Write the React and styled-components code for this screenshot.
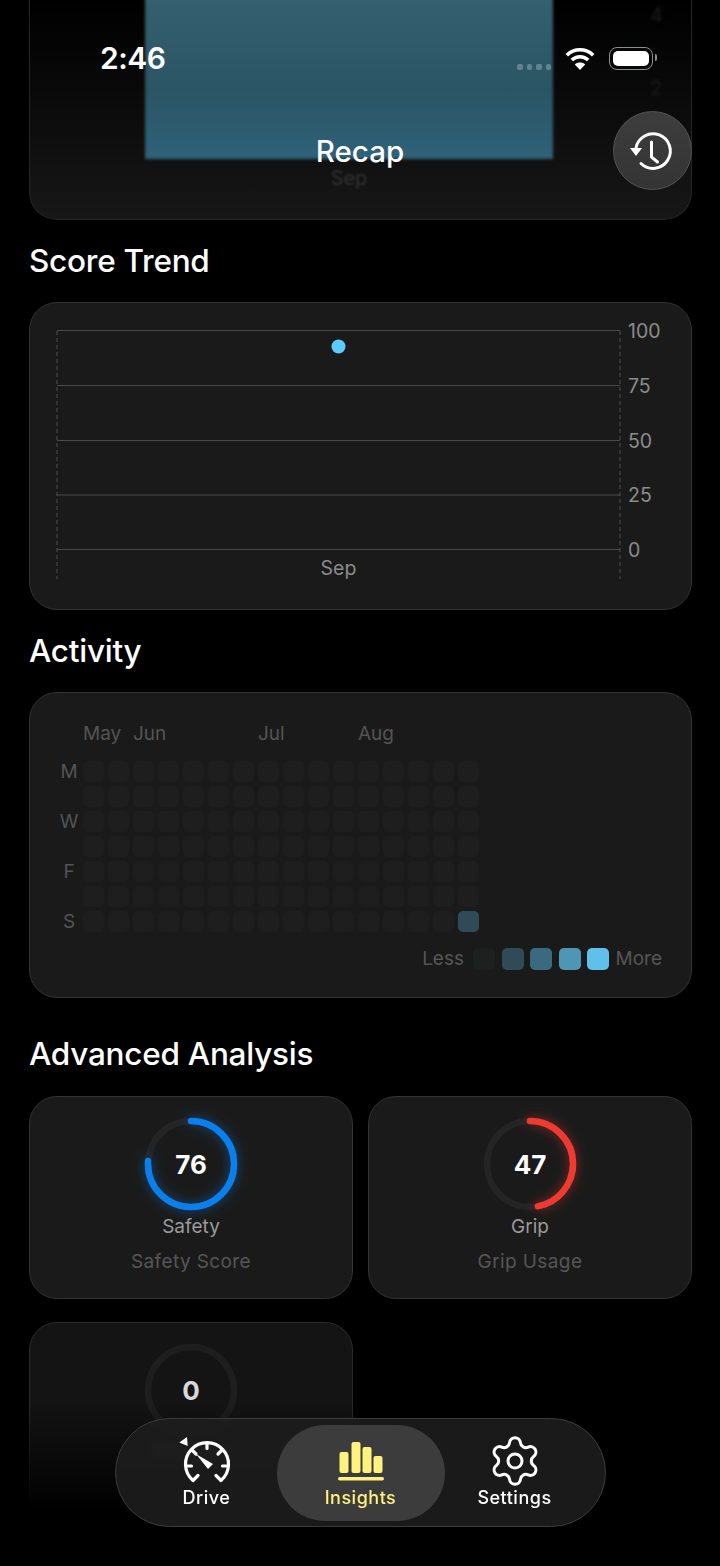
import React from 'react';
import styled, { createGlobalStyle } from 'styled-components';
import { Settings } from 'lucide-react';

const GlobalStyle = createGlobalStyle`
    html, body {
        margin: 0;
        padding: 0;
        background: #000;
    }
    body {
        font-family: Inter, "Liberation Sans", sans-serif;
        color: #fff;
    }
    * {
        box-sizing: border-box;
    }
`

const Screen = styled.div`
    position: relative;
    width: 720px;
    height: 1566px;
    overflow: hidden;
    background: #000;
`
const Content = styled.div`
    display: flex;
    flex-direction: column;
    padding: 0 28px 0 29px;
`
const Card = styled.div`
    background: #1a1a1a;
    border: 1.5px solid #333;
    border-radius: 28px;
`
const RecapCard = styled.div`
    height: 220px;
    padding-left: 115px;
    background: linear-gradient(#000 0%, #0a0a0a 45%, #111 75%, #171717 100%);
    border: 1.5px solid #262626;
    border-top: none;
    border-radius: 0 0 28px 28px;
    overflow: hidden;
`
const RecapRow = styled.div`
    display: flex;
    margin-top: -10px;
`
const RecapBar = styled.div`
    width: 408px;
    height: 169px;
    background: linear-gradient(#35606f 0%, #2a5564 60%, #2f6279 100%);
    filter: blur(1.5px);
`
const RecapTicks = styled.div`
    display: flex;
    flex-direction: column;
    gap: 49px;
    margin-left: 97px;
    padding-top: 13px;
    font-size: 20px;
    line-height: 24px;
    color: #1d1d1d;
    filter: blur(1.5px);
`
const RecapAxisLabel = styled.div`
    width: 408px;
    margin-top: 7px;
    text-align: center;
    font-size: 20px;
    line-height: 24px;
    color: #333;
    filter: blur(1.2px);
`
const SectionTitle = styled.h2`
    margin: ${(p) => p.$top || 21}px 0 ${(p) => p.$bottom || 21}px;
    font-size: 31.5px;
    line-height: 40px;
    font-weight: 500;
    letter-spacing: -0.25px;
    color: #fff;
`
const TrendCard = styled(Card)`
    height: 308px;
`
const TrendChart = styled.svg`
    display: block;
    width: 100%;
    height: 100%;
    font-family: Inter, "Liberation Sans", sans-serif;
    font-size: 19.5px;
    fill: #8c8c8c;
`
const ActivityCard = styled(Card)`
    height: 306px;
    padding: 29px 29px 0 23px;
`
const HeatGrid = styled.div`
    display: grid;
    grid-template-columns: 26px repeat(16, 21px);
    column-gap: 4px;
    row-gap: 4px;
`
const MonthRow = styled(HeatGrid)`
    margin-bottom: 15px;
`
const Month = styled.div`
    grid-row: 1;
    grid-column: ${(p) => p.$col + 2} / span 2;
    font-size: 19px;
    line-height: 24px;
    color: #545454;
`
const DayLabel = styled.div`
    grid-column: 1;
    font-size: 19px;
    line-height: 21px;
    padding-left: 6px;
    text-align: center;
    color: #545454;
`
const Cell = styled.div`
    width: 21px;
    height: 21px;
    border-radius: 5px;
    background: ${(p) => p.$color || '#1e1e1e'};
`
const Legend = styled.div`
    display: flex;
    align-items: center;
    justify-content: flex-end;
    margin-top: 16px;
    gap: 6.5px;
    font-size: 19px;
    line-height: 22px;
    color: #565656;
`
const LegendCell = styled.div`
    width: 22px;
    height: 22px;
    border-radius: 5px;
    background: ${(p) => p.$color};
`
const LegendLess = styled.span`
    margin-right: 2.5px;
`
const GaugeGrid = styled.div`
    display: grid;
    grid-template-columns: repeat(2, 324px);
    column-gap: 15px;
    row-gap: 23px;
`
const GaugeCard = styled(Card)`
    display: flex;
    flex-direction: column;
    align-items: center;
    height: 203px;
    padding-top: 21px;
    background: ${(p) => p.$dim ? '#141414' : '#1a1a1a'};
    border-color: ${(p) => p.$dim ? '#2b2b2b' : '#333'};
`
const Ring = styled.div`
    position: relative;
    width: 92px;
    height: 92px;
    svg {
        display: block;
        overflow: visible;
    }
`
const RingValue = styled.div`
    position: absolute;
    inset: 0;
    display: flex;
    align-items: center;
    justify-content: center;
    font-size: 26px;
    font-weight: 700;
    color: ${(p) => p.$dim ? '#d8d8d8' : '#fff'};
`
const GaugeLabel = styled.div`
    margin-top: 5px;
    font-size: 19px;
    line-height: 24px;
    color: ${(p) => p.$dim ? '#8a8a8a' : '#9b9b9b'};
`
const GaugeSub = styled.div`
    margin-top: 11px;
    font-size: 19px;
    line-height: 24px;
    letter-spacing: 0.4px;
    color: #565656;
`
const BottomFade = styled.div`
    position: absolute;
    left: 0;
    right: 0;
    top: 1400px;
    height: 135px;
    background: linear-gradient(rgba(0,0,0,0), rgba(0,0,0,1) 82%);
`
const StatusBar = styled.div`
    position: absolute;
    top: 38px;
    left: 100px;
    right: 67px;
    height: 40px;
    display: flex;
    align-items: center;
    justify-content: space-between;
`
const Clock = styled.div`
    font-size: 30px;
    font-weight: 600;
    letter-spacing: -0.5px;
    line-height: 40px;
`
const StatusIcons = styled.div`
    display: flex;
    align-items: center;
    gap: 14px;
`
const SignalDots = styled.div`
    display: flex;
    gap: 4px;
    margin-top: 17px;
`
const SignalDot = styled.div`
    width: 5.5px;
    height: 6px;
    border-radius: 2px;
    background: #5f8593;
`
const Battery = styled.div`
    position: relative;
    width: 44px;
    height: 23px;
    padding: 3px;
    border: 1.5px solid #8a8f92;
    border-radius: 8px;
    &::before {
        content: '';
        display: block;
        height: 100%;
        background: #fff;
        border-radius: 5px;
    }
    &::after {
        content: '';
        position: absolute;
        right: -5px;
        top: 6px;
        width: 2.5px;
        height: 7px;
        border-radius: 0 2px 2px 0;
        background: #8a8f92;
    }
`
const HeaderTitle = styled.div`
    position: absolute;
    top: 131px;
    left: 0;
    right: 0;
    text-align: center;
    font-size: 29.5px;
    line-height: 40px;
    font-weight: 500;
    color: #fff;
`
const HistoryButton = styled.div`
    position: absolute;
    top: 111px;
    left: 613px;
    width: 79px;
    height: 79px;
    display: flex;
    align-items: center;
    justify-content: center;
    border-radius: 50%;
    background: linear-gradient(#3d3d3d, #343434);
    border: 1.5px solid #545454;
`
const TabBar = styled.div`
    position: absolute;
    top: 1418px;
    left: 115px;
    width: 491px;
    height: 109px;
    display: flex;
    align-items: center;
    justify-content: center;
    border-radius: 55px;
    background: rgba(30, 30, 30, 0.88);
    backdrop-filter: blur(4px);
    border: 1.5px solid #3c3c3c;
`
const Tab = styled.div`
    width: ${(p) => p.$active ? 168 : 140}px;
    height: 96px;
    display: flex;
    flex-direction: column;
    align-items: center;
    justify-content: flex-end;
    padding-bottom: 11px;
    border-radius: 48px;
    background: ${(p) => p.$active ? '#3c3c3c' : 'transparent'};
    color: ${(p) => p.$active ? '#fff27f' : '#fff'};
    font-size: 18px;
    line-height: 24px;
    font-weight: 500;
    letter-spacing: 0.5px;
`
const TabIcon = styled.div`
    height: 50px;
    display: flex;
    align-items: center;
    justify-content: center;
`

const gridYs = [27.5, 82.5, 137.5, 192, 246.5];
const axisLabels = ['100', '75', '50', '25', '0'];

function ScoreTrend(){
    return (
        <TrendChart viewBox="0 0 661 306">
            {gridYs.map((y, i) => (
                <g key={y}>
                    <line x1="27" x2="590" y1={y} y2={y} stroke="#4a4a4a" strokeWidth="1.2" />
                    <text x="598" y={y + 7}>{axisLabels[i]}</text>
                </g>
            ))}
            <line x1="27" x2="27" y1="28" y2="276" stroke="#4e4e4e" strokeWidth="1" strokeDasharray="4 3" />
            <line x1="590" x2="590" y1="28" y2="276" stroke="#4e4e4e" strokeWidth="1" strokeDasharray="4 3" />
            <circle cx="308.5" cy="43.5" r="7" fill="#5ccbff" />
            <text x="308.5" y="272" textAnchor="middle">Sep</text>
        </TrendChart>
    );
}

const days = ['M', '', 'W', '', 'F', '', 'S'];

function Heatmap(){
    return (
        <HeatGrid>
            {days.map((day, row) => (
                <React.Fragment key={row}>
                    <DayLabel>{day}</DayLabel>
                    {Array.from({length: 16}).map((_, col) => (
                        <Cell key={col} $color={row === 6 && col === 15 ? '#2f4b58' : null} />
                    ))}
                </React.Fragment>
            ))}
        </HeatGrid>
    );
}

function Gauge(props){
    const r = 43;
    const full = 2 * Math.PI * r;
    const glow = props.color ? `drop-shadow(0 0 6px ${props.color}80)` : 'none';
    return (
        <GaugeCard $dim={props.dim}>
            <Ring>
                <svg width="92" height="92" viewBox="0 0 92 92">
                    <circle cx="46" cy="46" r={r} fill="none" stroke={props.dim ? '#1e1e1e' : '#242424'} strokeWidth="6.5" />
                    {props.value > 0 && (
                        <circle cx="46" cy="46" r={r} fill="none" stroke={props.color} strokeWidth="6.5"
                            strokeLinecap="round"
                            strokeDasharray={`${full * props.value / 100} ${full}`}
                            transform="rotate(-90 46 46)"
                            style={{filter: glow}} />
                    )}
                </svg>
                <RingValue $dim={props.dim}>{props.value}</RingValue>
            </Ring>
            <GaugeLabel $dim={props.dim}>{props.label}</GaugeLabel>
            {props.sub && <GaugeSub>{props.sub}</GaugeSub>}
        </GaugeCard>
    );
}

function WifiIcon(){
    return (
        <svg width="30" height="23" viewBox="0 0 30 23" fill="none" stroke="#fff" strokeWidth="3.6">
            <path d="M1.8 8.2 C9 1 21 1 28.2 8.2" />
            <path d="M6.8 13 C11.5 8.6 18.5 8.6 23.2 13" />
            <path d="M15 23 L9.8 17.4 C12.5 15 17.5 15 20.2 17.4 Z" fill="#fff" stroke="none" />
        </svg>
    );
}

function HistoryIcon(){
    return (
        <svg width="46" height="42" viewBox="0 0 46 42" fill="none" stroke="#fff" strokeWidth="3" strokeLinecap="round" strokeLinejoin="round">
            <path d="M6 18 A17.3 17.3 0 1 1 11 33.5" />
            <path d="M21.5 12 V27 L27.5 32" />
            <path d="M0 18 L12 18 L6 26 Z" fill="#fff" stroke="none" />
        </svg>
    );
}

function DriveIcon(){
    return (
        <svg width="56" height="50" viewBox="0 0 56 50" fill="none" stroke="#fff" strokeWidth="3.2" strokeLinecap="round" strokeLinejoin="round">
            <path d="M0.3 6.5 L8 1 L8.7 10 Z" fill="#fff" stroke="none" />
            <path d="M19 39.5 L14 44.5 A21.5 21.5 0 1 1 42 44.5 L37 39.5" />
            <path d="M28 7 V12.5 M13 14 L17 18 M43 14 L39 18 M7 30 H12.5 M49 30 H43.5" />
            <path d="M17 18 L34 28 L29 33 Z" fill="#fff" stroke="none" />
        </svg>
    );
}

function InsightsIcon(){
    return (
        <svg width="46" height="40" viewBox="0 0 46 40" fill="#fff27f">
            <rect x="1.5" y="11" width="9" height="21" rx="2" />
            <rect x="13.5" y="1" width="9" height="31" rx="2" />
            <rect x="24.5" y="6" width="9" height="26" rx="2" />
            <rect x="35.5" y="15" width="9" height="17" rx="2" />
            <rect x="0" y="36" width="46" height="3.5" rx="1.7" />
        </svg>
    );
}

function App(){
    return (
        <Screen>
            <GlobalStyle />
            <Content>
                <RecapCard>
                    <RecapRow>
                        <RecapBar />
                        <RecapTicks>
                            <span>4</span>
                            <span>2</span>
                        </RecapTicks>
                    </RecapRow>
                    <RecapAxisLabel>Sep</RecapAxisLabel>
                </RecapCard>

                <SectionTitle>Score Trend</SectionTitle>
                <TrendCard><ScoreTrend /></TrendCard>

                <SectionTitle>Activity</SectionTitle>
                <ActivityCard>
                    <MonthRow>
                        <Month $col={0}>May</Month>
                        <Month $col={2}>Jun</Month>
                        <Month $col={7}>Jul</Month>
                        <Month $col={11}>Aug</Month>
                    </MonthRow>
                    <Heatmap />
                    <Legend>
                        <LegendLess>Less</LegendLess>
                        <LegendCell $color="#1e1f1f" />
                        <LegendCell $color="#2f4b58" />
                        <LegendCell $color="#3a6a80" />
                        <LegendCell $color="#4e96b4" />
                        <LegendCell $color="#5fc0ea" />
                        <span>More</span>
                    </Legend>
                </ActivityCard>

                <SectionTitle $top={36} $bottom={22}>Advanced Analysis</SectionTitle>
                <GaugeGrid>
                    <Gauge value={76} color="#0a7fee" label="Safety" sub="Safety Score" />
                    <Gauge value={47} color="#ee3a30" label="Grip" sub="Grip Usage" />
                    <Gauge value={0} dim label="Distance" />
                </GaugeGrid>
            </Content>

            <BottomFade />

            <StatusBar>
                <Clock>2:46</Clock>
                <StatusIcons>
                    <SignalDots>
                        <SignalDot /><SignalDot /><SignalDot /><SignalDot />
                    </SignalDots>
                    <WifiIcon />
                    <Battery />
                </StatusIcons>
            </StatusBar>
            <HeaderTitle>Recap</HeaderTitle>
            <HistoryButton><HistoryIcon /></HistoryButton>

            <TabBar>
                <Tab>
                    <TabIcon><DriveIcon /></TabIcon>
                    Drive
                </Tab>
                <Tab $active>
                    <TabIcon><InsightsIcon /></TabIcon>
                    Insights
                </Tab>
                <Tab>
                    <TabIcon><Settings size={56} strokeWidth={1.3} /></TabIcon>
                    Settings
                </Tab>
            </TabBar>
        </Screen>
    );
}

export default App;
